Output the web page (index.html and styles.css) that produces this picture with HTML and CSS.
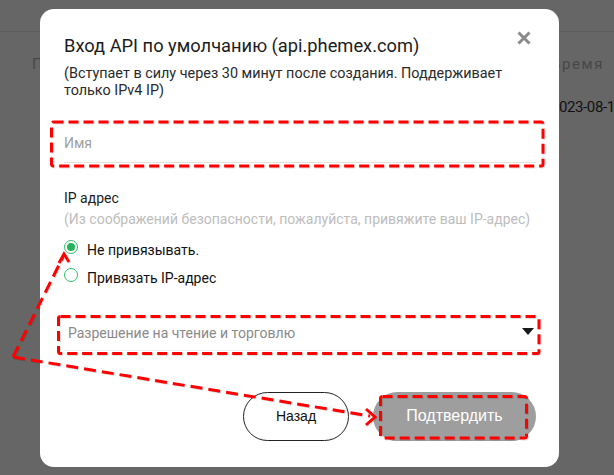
FILE: index.html
```html
<!DOCTYPE html>
<html lang="ru">
<head>
<meta charset="utf-8">
<title>API</title>
<link rel="stylesheet" href="styles.css">
</head>
<body>
<div class="page">
  <div class="topbar"></div>
  <div class="table">
    <span class="th">П</span><span class="th th-time">Время</span>
    <span class="td"></span><span class="td td-date">2023-08-15 10:24</span>
  </div>
</div>

<div class="overlay">
  <div class="modal">
    <div class="modal-head">
      <h2 class="title">Вход API по умолчанию (api.phemex.com)</h2>
      <button class="close" aria-label="close">
        <svg width="14" height="14" viewBox="0 0 14 14"><path d="M1.5 1.5 L12.5 12.5 M12.5 1.5 L1.5 12.5" stroke="#8a8a8a" stroke-width="3" stroke-linecap="butt"/></svg>
      </button>
    </div>
    <p class="subtitle">(Вступает в силу через 30 минут после создания. Поддерживает<br>только IPv4 IP)</p>

    <div class="name-field">Имя</div>

    <div class="ip-label">IP адрес</div>
    <div class="ip-hint">(Из соображений безопасности, пожалуйста, привяжите ваш IP-адрес)</div>

    <div class="radios">
      <div class="radio"><span class="dot checked"></span><span>Не привязывать.</span></div>
      <div class="radio"><span class="dot"></span><span>Привязать IP-адрес</span></div>
    </div>

    <div class="select"><span>Разрешение на чтение и торговлю</span><span class="caret"></span></div>

    <div class="actions">
      <button class="btn back">Назад</button>
      <button class="btn confirm">Подтвердить</button>
    </div>
  </div>
</div>

<svg class="annot" width="614" height="475" viewBox="0 0 614 475">
  <g fill="none" stroke="#ff0000" stroke-width="3" stroke-dasharray="10 5">
    <rect x="51.5" y="122" width="491.5" height="44" rx="2"/>
    <rect x="58.5" y="316.5" width="480.5" height="37" rx="2"/>
    <rect x="380.5" y="396.5" width="146" height="41.5" rx="2"/>
  </g>
  <g fill="none" stroke="#ff0000" stroke-width="3" stroke-dasharray="12 6">
    <path d="M13 357 L63 257"/>
    <path d="M13 357 L370 416"/>
  </g>
  <g fill="none" stroke="#ff0000" stroke-width="3" stroke-linejoin="miter">
    <path d="M59 263 L64 254 L69 262"/>
    <path d="M366 409 L375 417 L366 425"/>
  </g>
</svg>
</body>
</html>
```

FILE: styles.css
```css
* { box-sizing: border-box; }

html, body {
  margin: 0;
  padding: 0;
  width: 614px;
  height: 475px;
  overflow: hidden;
  background: #666666;
  font-family: Roboto, "Noto Sans", sans-serif;
}

/* background page (dimmed) */
.page {
  width: 614px;
  height: 475px;
  overflow: hidden;
}
.topbar {
  height: 32px;
  border-bottom: 1px solid #5b5b5b;
}
.table {
  padding: 22px 0 0 32px;
  display: grid;
  grid-template-columns: 519px 200px;
  grid-auto-rows: 20px;
  row-gap: 23px;
  line-height: 20px;
  font-size: 15px;
  white-space: nowrap;
}
.th {
  color: #484848;
}
.th-time {
  letter-spacing: 1.6px;
}
.td-date {
  color: #111;
  letter-spacing: -0.4px;
}

/* overlay + modal */
.overlay {
  position: fixed;
  inset: 0;
  display: flex;
  align-items: center;
  justify-content: center;
  padding-right: 15px;
}
.modal {
  width: 519px;
  height: 458px;
  background: #fff;
  border-radius: 14px;
  padding: 25px 23px 25px 24px;
  display: flex;
  flex-direction: column;
}
.modal-head {
  display: flex;
  justify-content: space-between;
  align-items: flex-start;
}
.title {
  margin: 0;
  font-size: 18.3px;
  line-height: 24px;
  font-weight: 400;
  color: #1c1c1c;
}
.close {
  width: 20px;
  height: 20px;
  margin: -6px 2px 0 0;
  padding: 0;
  border: 0;
  background: transparent;
  display: flex;
  align-items: center;
  justify-content: center;
}
.subtitle {
  margin: 7px 0 0;
  font-size: 14.4px;
  line-height: 17px;
  color: #2a2a2a;
}
.name-field {
  margin-top: 26px;
  height: 38px;
  line-height: 37px;
  border-bottom: 1px solid #e2e2e2;
  font-size: 14px;
  color: #a0a0a0;
}
.ip-label {
  margin-top: 25px;
  font-size: 14px;
  line-height: 20px;
  color: #1c1c1c;
}
.ip-hint {
  margin-top: 1px;
  font-size: 14px;
  line-height: 20px;
  color: #bdbdbd;
}
.radios {
  margin-top: 10px;
  display: flex;
  flex-direction: column;
  gap: 6px;
}
.radio {
  display: flex;
  align-items: flex-start;
  gap: 9px;
  height: 22px;
  line-height: 22px;
  font-size: 14px;
  color: #111;
}
.dot {
  width: 14px;
  height: 14px;
  margin-top: 1px;
  border: 1.5px solid #2fbf67;
  border-radius: 50%;
  display: flex;
  align-items: center;
  justify-content: center;
  flex: none;
}
.dot.checked::after {
  content: "";
  width: 8px;
  height: 8px;
  border-radius: 50%;
  background: #27b35c;
}
.select {
  margin-top: 28px;
  height: 34px;
  line-height: 33px;
  padding: 0 2px 0 4px;
  border-bottom: 1px solid #efefef;
  display: flex;
  justify-content: space-between;
  align-items: center;
  font-size: 14px;
  color: #8a8a8a;
}
.caret {
  width: 0;
  height: 0;
  border-left: 6px solid transparent;
  border-right: 6px solid transparent;
  border-top: 7px solid #1a1a1a;
  margin-top: -4px;
}
.actions {
  margin-top: 41px;
  display: flex;
  justify-content: flex-end;
  gap: 24px;
}
.btn {
  height: 49px;
  border-radius: 25px;
  font-family: "Liberation Sans", Arial, sans-serif;
  padding: 0;
}
.back {
  width: 106px;
  background: #fff;
  border: 1px solid #222;
  font-size: 14px;
  color: #111;
}
.confirm {
  width: 163px;
  background: #9e9e9e;
  border: 0;
  font-size: 16px;
  color: #fff;
}

/* annotation layer */
.annot {
  position: fixed;
  left: 0;
  top: 0;
  pointer-events: none;
  filter: drop-shadow(1px 1px 0 rgba(0,0,0,0.12));
}
```
